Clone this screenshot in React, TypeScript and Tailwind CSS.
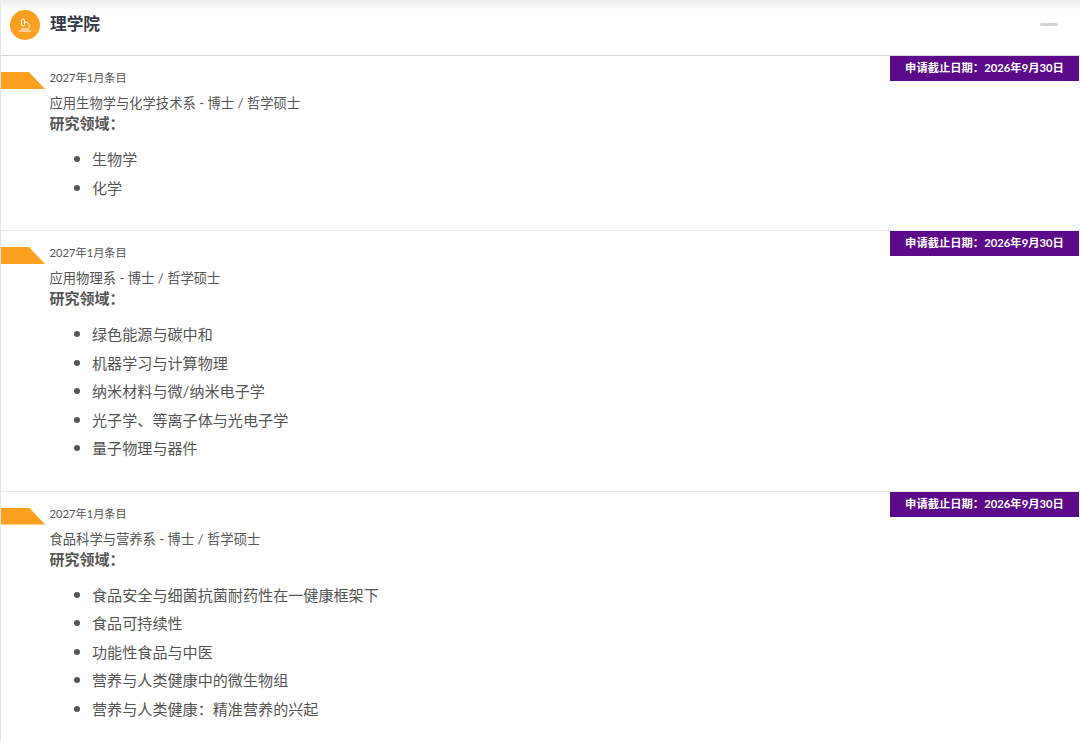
import React from 'react';

const fontStack = "font-['Lato','Noto_Sans_CJK_SC',sans-serif]";

const programs = [
  {
    title: '应用生物学与化学技术系 - 博士 / 哲学硕士',
    areas: ['生物学', '化学'],
  },
  {
    title: '应用物理系 - 博士 / 哲学硕士',
    areas: ['绿色能源与碳中和', '机器学习与计算物理', '纳米材料与微/纳米电子学', '光子学、等离子体与光电子学', '量子物理与器件'],
  },
  {
    title: '食品科学与营养系 - 博士 / 哲学硕士',
    areas: ['食品安全与细菌抗菌耐药性在一健康框架下', '食品可持续性', '功能性食品与中医', '营养与人类健康中的微生物组', '营养与人类健康：精准营养的兴起'],
  },
];

const ProgramRow: React.FC<{ title: string; areas: string[] }> = ({ title, areas }) => (
  <div className="relative border-b border-[#ebebeb] pl-[48.5px] pt-[13px] pb-[28px]">
    {/* Ribbon */}
    <div className="absolute left-0 top-[16px] h-[17px] w-[44px] bg-[#fda01f] [clip-path:polygon(0_0,28px_0,100%_100%,0_100%)]" />
    {/* Deadline badge */}
    <div className="absolute right-[1px] top-0 flex h-[25px] w-[189px] items-center justify-center bg-[#5c0a8a] text-[11.3px] font-bold text-white">
      申请截止日期：2026年9月30日
    </div>
    <p className="text-[11.2px] leading-[17px] text-[#555]">2027年1月条目</p>
    <p className="mt-[9px] text-[13.3px] leading-[17px] text-[#555]">{title}</p>
    <p className="mt-[1px] text-[15px] font-bold leading-[20px] text-[#555]">研究领域：</p>
    <ul className="mt-[12px] flex flex-col pl-[24.5px] text-[15.1px] leading-[28.5px] text-[#555]">
      {areas.map((area) => (
        <li key={area} className="flex items-center gap-[12px]">
          <span className="h-[6px] w-[6px] rounded-full bg-[#555]" />
          {area}
        </li>
      ))}
    </ul>
  </div>
);

export default function App() {
  return (
    <div className={`h-[741px] w-[1080px] overflow-hidden bg-white ${fontStack}`}>
      <div className="border-l border-[#e6e6e6] bg-gradient-to-b from-[#ececec] to-white to-[10px]">
        {/* Faculty header */}
        <div className="flex h-[56px] items-center justify-between border-b border-[#d9d9d9] pb-[6px] pl-[9px] pr-[22px]">
          <div className="flex items-center gap-[10px]">
            <div className="flex h-[30px] w-[30px] items-center justify-center rounded-full bg-[#fda01f]">
              <svg width="18" height="18" viewBox="0 0 18 18" fill="none" stroke="white" strokeWidth="1" strokeLinecap="round" strokeLinejoin="round">
                <path d="M3 15h12" />
                <path d="M5.500 13h7" />
                <rect x="5.500" y="3" width="3" height="7" rx="1.500" />
                <path d="M9 6c2.500 0 4.500 1.800 4.500 4.200 0 1.200-.5 2.200-1.300 2.800" />
              </svg>
            </div>
            <span className="text-[16.7px] font-bold text-[#333a4a]">理学院</span>
          </div>
          <div className="h-[3px] w-[18px] rounded-full bg-[#d2d2d2]" />
        </div>
        {programs.map((p) => (
          <ProgramRow key={p.title} title={p.title} areas={p.areas} />
        ))}
      </div>
    </div>
  );
}
